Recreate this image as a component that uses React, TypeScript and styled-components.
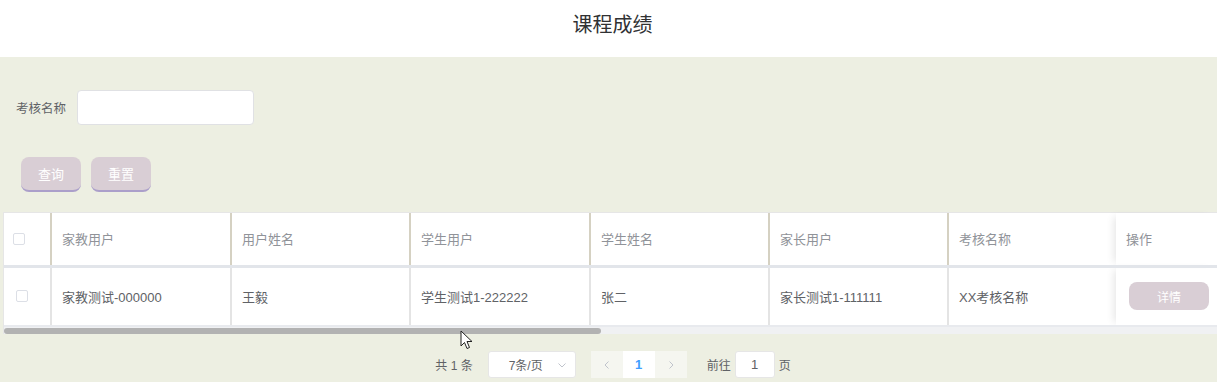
import React from "react";
import styled, { createGlobalStyle } from "styled-components";

const Global = createGlobalStyle`
  html, body { margin: 0; padding: 0; }
  body {
    font-family: "Liberation Sans", "Noto Sans CJK SC", sans-serif;
    background: #edefe2;
    width: 1217px;
    height: 382px;
    overflow: hidden;
  }
  * { box-sizing: border-box; }
`;

const Page = styled.div`
  display: flex;
  flex-direction: column;
  height: 382px;
`;

const TitleBar = styled.div`
  height: 57px;
  background: #fff;
  display: flex;
  align-items: center;
  justify-content: center;
  font-size: 20px;
  color: #303133;
  padding-bottom: 10px;
  padding-left: 8px;
`;

const Content = styled.div`
  flex: 1;
  background: #edefe2;
  padding: 33px 0 0 3px;
  display: flex;
  flex-direction: column;
`;

const FormRow = styled.div`
  display: flex;
  align-items: center;
  gap: 11px;
  padding-left: 13px;
`;

const Label = styled.label`
  font-size: 12.5px;
  color: #606266;
`;

const Input = styled.input`
  width: 177px;
  height: 35px;
  border: 1px solid #e0e1e4;
  border-radius: 4px;
  background: #fff;
  outline: none;
`;

const ButtonRow = styled.div`
  display: flex;
  gap: 10px;
  padding-left: 18px;
  margin-top: 32px;
`;

const Button = styled.button`
  width: 60px;
  height: 35px;
  border: none;
  border-bottom: 2px solid #ab9fca;
  border-radius: 8px;
  background: #d9ced5;
  color: #fff;
  font-family: inherit;
  font-size: 13px;
  padding: 0;
`;

const TableWrap = styled.div`
  margin-top: 20px;
  position: relative;
  background: #fff;
  border-top: 1px solid #e6e6e6;
  border-left: 1px solid #e6e6e6;
`;

const Table = styled.table`
  border-collapse: collapse;
  table-layout: fixed;
  width: 100%;
`;

const HeadCell = styled.th<{ $last?: boolean }>`
  height: 53px;
  padding: 0 10px;
  text-align: left;
  font-weight: normal;
  font-size: 13px;
  color: #909399;
  border-right: ${(p) => (p.$last ? "none" : "2px solid #d5d1c2")};
  border-bottom: 3px solid #e2e5ea;
  background: #fff;
  vertical-align: middle;
`;

const BodyCell = styled.td<{ $last?: boolean }>`
  height: 60px;
  padding: 0 10px;
  font-size: 13px;
  color: #606266;
  border-right: ${(p) => (p.$last ? "none" : "2px solid #e4e4e4")};
  border-bottom: 2px solid #e8eaee;
  vertical-align: middle;
`;

const FixedHead = styled(HeadCell)`
  box-shadow: -6px 0 8px -4px rgba(0, 0, 0, 0.1);
`;

const FixedCell = styled(BodyCell)`
  box-shadow: -6px 0 8px -4px rgba(0, 0, 0, 0.1);
`;

const Check = styled.span<{ $dx: number }>`
  display: block;
  width: 12px;
  height: 12px;
  border: 1px solid #dcdfe6;
  border-radius: 2px;
  background: #fff;
  margin-left: ${(p) => p.$dx}px;
`;

const DetailButton = styled.button`
  width: 80px;
  height: 28px;
  border: none;
  border-radius: 8px;
  background: #d9ced5;
  color: #fff;
  font-family: inherit;
  font-size: 12px;
  margin-left: 3px;
`;

const Scrollbar = styled.div`
  height: 7px;
  background: #f0f1f3;
  display: flex;
  align-items: center;
`;

const Thumb = styled.div<{ $w: number }>`
  width: ${(p) => p.$w}px;
  height: 6px;
  border-radius: 3px;
  background: #b2b2b2;
`;

const Pager = styled.div`
  display: flex;
  align-items: center;
  justify-content: center;
  margin-top: 17px;
  font-size: 12px;
  color: #606266;
  padding-left: 6px;
`;

const Total = styled.span`
  margin-right: 15px;
`;

const SizeSelect = styled.div`
  width: 88px;
  height: 27px;
  background: #fff;
  border: 1px solid #e6e6e6;
  border-radius: 3px;
  display: flex;
  align-items: center;
  justify-content: space-between;
  padding: 0 8px 0 20px;
  margin-right: 15px;
`;

const Arrow = styled.span`
  color: #c0c4cc;
  font-size: 11px;
  display: flex;
`;

const PageBtn = styled.div<{ $active?: boolean }>`
  width: 32px;
  height: 27px;
  display: flex;
  align-items: center;
  justify-content: center;
  background: ${(p) => (p.$active ? "#fff" : "#f5f6f0")};
  color: ${(p) => (p.$active ? "#409eff" : "#c0c4cc")};
  font-weight: ${(p) => (p.$active ? "bold" : "normal")};
  font-size: 13px;
`;

const Jump = styled.span`
  margin-left: 20px;
  display: flex;
  align-items: center;
  gap: 4px;
`;

const JumpInput = styled.div`
  width: 40px;
  height: 27px;
  background: #fff;
  border: 1px solid #e6e6e6;
  border-radius: 3px;
  display: flex;
  align-items: center;
  justify-content: center;
  font-size: 13px;
  color: #606266;
`;

const Cursor = styled.svg`
  position: absolute;
  left: 460px;
  top: 330px;
`;

const cols = [47, 180, 179, 180, 179, 179, 168];
const heads = ["家教用户", "用户姓名", "学生用户", "学生姓名", "家长用户", "考核名称"];
const row = ["家教测试-000000", "王毅", "学生测试1-222222", "张二", "家长测试1-111111", "XX考核名称"];

const Chevron = ({ dir }: { dir: "l" | "r" | "d" }) => (
  <svg width="10" height="10" viewBox="0 0 10 10" fill="none" stroke="currentColor" strokeWidth="1">
    {dir === "l" && <path d="M6.5 1.5 L3 5 L6.5 8.5" />}
    {dir === "r" && <path d="M3.5 1.5 L7 5 L3.5 8.5" />}
    {dir === "d" && <path d="M1.5 3.5 L5 7 L8.5 3.5" />}
  </svg>
);

export default function App() {
  return (
    <Page lang="zh-CN">
      <Global />
      <TitleBar>课程成绩</TitleBar>
      <Content>
        <FormRow>
          <Label>考核名称</Label>
          <Input />
        </FormRow>
        <ButtonRow>
          <Button>查询</Button>
          <Button>重置</Button>
        </ButtonRow>
        <TableWrap>
          <Table>
            <colgroup>
              {cols.map((w, i) => (
                <col key={i} style={{ width: w }} />
              ))}
              <col />
            </colgroup>
            <thead>
              <tr>
                <HeadCell>
                  <Check $dx={-1} />
                </HeadCell>
                {heads.map((h, i) => (
                  <HeadCell key={h} $last={i === heads.length - 1}>
                    {h}
                  </HeadCell>
                ))}
                <FixedHead $last>操作</FixedHead>
              </tr>
            </thead>
            <tbody>
              <tr>
                <BodyCell>
                  <Check $dx={2} />
                </BodyCell>
                {row.map((c, i) => (
                  <BodyCell key={c} $last={i === row.length - 1}>
                    {c}
                  </BodyCell>
                ))}
                <FixedCell $last>
                  <DetailButton>详情</DetailButton>
                </FixedCell>
              </tr>
            </tbody>
          </Table>
          <Scrollbar>
            <Thumb $w={597} />
          </Scrollbar>
        </TableWrap>
        <Pager>
          <Total>共 1 条</Total>
          <SizeSelect>
            <span>7条/页</span>
            <Arrow>
              <Chevron dir="d" />
            </Arrow>
          </SizeSelect>
          <PageBtn>
            <Chevron dir="l" />
          </PageBtn>
          <PageBtn $active>1</PageBtn>
          <PageBtn>
            <Chevron dir="r" />
          </PageBtn>
          <Jump>
            前往
            <JumpInput>1</JumpInput>
            页
          </Jump>
        </Pager>
      </Content>
      <Cursor width="14" height="20" viewBox="0 0 14 20">
        <path d="M1 1 L1 16 L4.5 12.5 L7 18.5 L9.5 17.5 L7 11.5 L12 11.5 Z" fill="#fff" stroke="#222" strokeWidth="1" />
      </Cursor>
    </Page>
  );
}
